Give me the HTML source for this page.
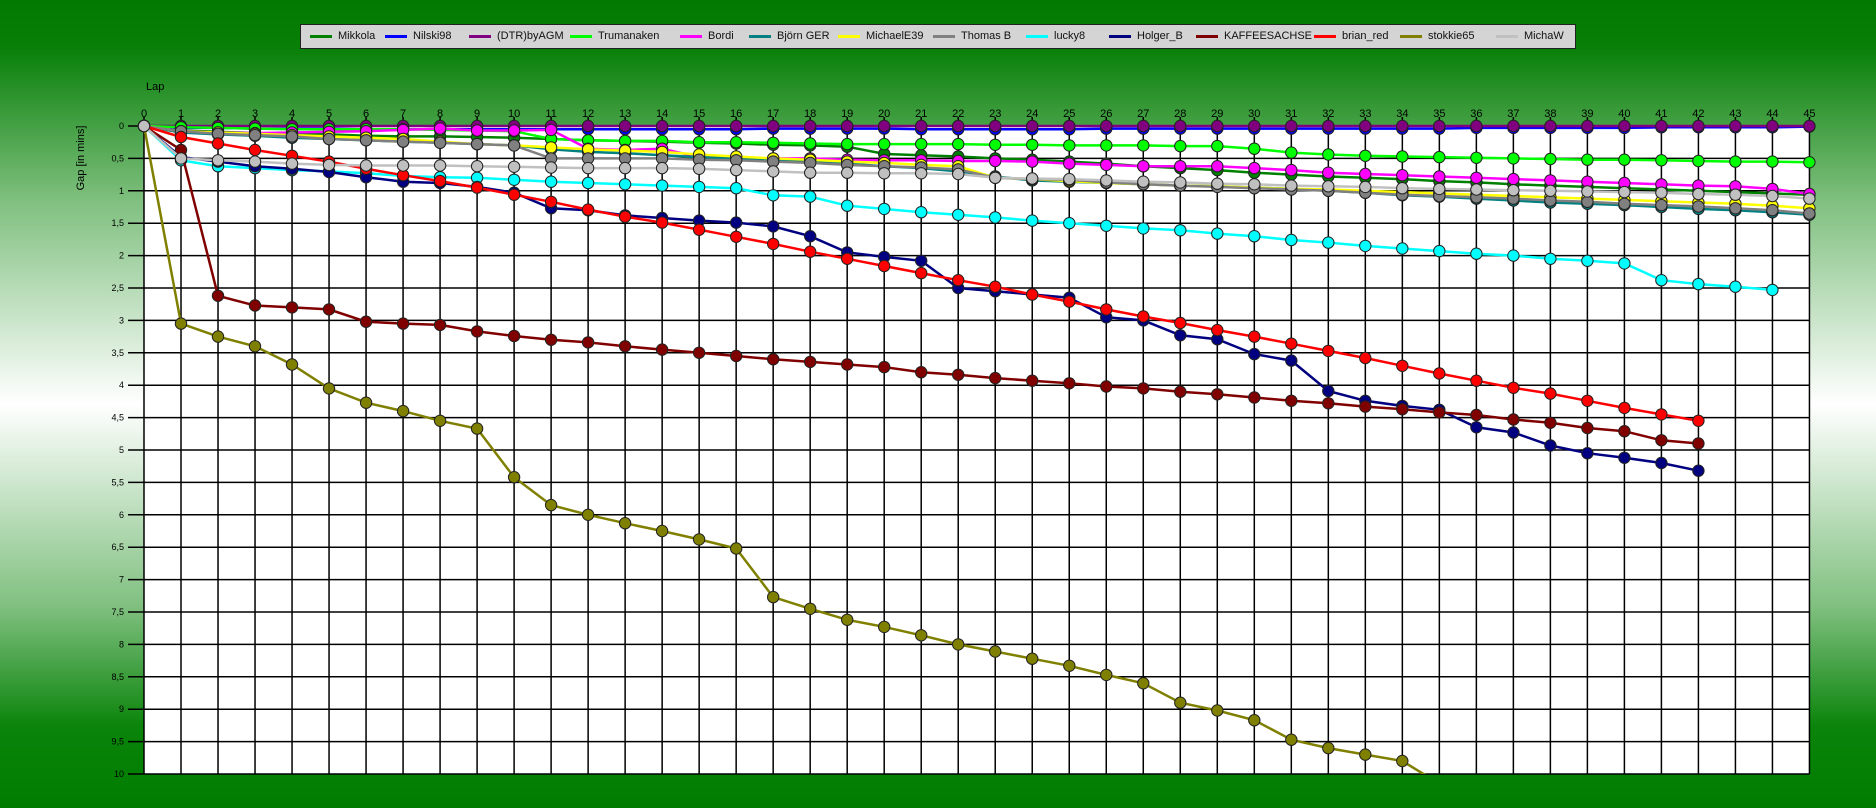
<!DOCTYPE html>
<html><head><meta charset="utf-8"><style>
html,body{margin:0;padding:0}
body{width:1876px;height:808px;overflow:hidden;background:linear-gradient(#027a02 0%,#088008 6%,#80c080 25%,#ffffff 50%,#80c080 75%,#0a840a 90%,#007d00 100%);font-family:"Liberation Sans",sans-serif;position:relative}
#leg{position:absolute;left:300px;top:24px;width:1276px;height:25px;background:#d4d4d4;border:1px solid #222;box-sizing:border-box}
.li{position:absolute;top:0;height:23px;font-size:11px;line-height:23px;color:#111;white-space:nowrap}
.li i{position:absolute;left:0;top:10px;width:22px;height:3px}
.li span{position:absolute;left:28px}
svg{position:absolute;left:0;top:0}
</style></head><body>
<div id="leg"></div>
<svg id="s" width="1876" height="808" font-family="Liberation Sans, sans-serif"></svg>
<script>
var names=[["Mikkola","#008000"],["Nilski98","#0000ff"],["(DTR)byAGM","#800080"],["Trumanaken","#00ff00"],["Bordi","#ff00ff"],["Björn GER","#008080"],["MichaelE39","#ffff00"],["Thomas B","#808080"],["lucky8","#00ffff"],["Holger_B","#000080"],["KAFFEESACHSE","#800000"],["brian_red","#ff0000"],["stokkie65","#808000"],["MichaW","#c0c0c0"]];
var lx=[309,384,468,569,679,748,837,932,1025,1108,1195,1313,1399,1495];
var L=document.getElementById('leg'),h='';
names.forEach(function(n,i){h+='<div class="li" style="left:'+(lx[i]-300)+'px"><i style="background:'+n[1]+'"></i><span>'+n[0]+'</span></div>';});
L.innerHTML=h;
var X0=144,DX=37.01,Y0=126,DY=64.8;
function X(l){return X0+l*DX}function Y(g){return Y0+g*DY}
var s='';
s+='<rect x="144" y="126" width="1665.5" height="648" fill="#fff"/>';
for(var i=0;i<=45;i++){var x=X(i);s+='<line x1="'+x+'" y1="117" x2="'+x+'" y2="774" stroke="#000" stroke-width="1.5"/>';s+='<text x="'+x+'" y="117" font-size="11" text-anchor="middle">'+i+'</text>';}
for(var k=0;k<=20;k++){var y=Y(k/2);s+='<line x1="128" y1="'+y+'" x2="1809.5" y2="'+y+'" stroke="#000" stroke-width="1.5"/>';var t=(k/2).toString().replace('.',',');s+='<text x="124" y="'+(y+3)+'" font-size="9" text-anchor="end">'+t+'</text>';}
s+='<text x="146" y="90" font-size="11">Lap</text>';
s+='<text transform="translate(84,158) rotate(-90)" font-size="11" text-anchor="middle">Gap [in mins]</text>';
var D={
"Mikkola":[0,0.07,0.09,0.11,0.12,0.13,0.15,0.16,0.16,0.17,0.18,0.2,0.22,0.23,0.24,0.26,0.27,0.29,0.3,0.32,0.43,0.45,0.47,0.5,0.52,0.55,0.58,0.62,0.65,0.68,0.72,0.75,0.78,0.8,0.82,0.85,0.87,0.9,0.92,0.94,0.96,0.98,1.0,1.02,1.04,1.06],
"Nilski98":[0,0.03,0.03,0.04,0.04,0.04,0.05,0.05,0.05,0.05,0.05,0.05,0.05,0.05,0.05,0.05,0.05,0.04,0.04,0.04,0.04,0.05,0.05,0.05,0.05,0.05,0.04,0.04,0.04,0.04,0.04,0.04,0.04,0.04,0.04,0.04,0.03,0.03,0.03,0.03,0.03,0.02,0.02,0.02,0.02,0.01],
"(DTR)byAGM":[0,0,0,0,0,0,0,0,0,0,0,0,0,0,0,0,0,0,0,0,0,0,0,0,0,0,0,0,0,0,0,0,0,0,0,0,0,0,0,0,0,0,0,0,0,0],
"Trumanaken":[0,0.02,0.03,0.04,0.05,0.05,0.05,0.05,0.06,0.07,0.08,0.2,0.22,0.23,0.23,0.25,0.25,0.26,0.27,0.28,0.28,0.28,0.28,0.29,0.29,0.3,0.3,0.3,0.31,0.31,0.35,0.41,0.44,0.46,0.47,0.48,0.49,0.5,0.51,0.52,0.52,0.53,0.54,0.55,0.55,0.56],
"Bordi":[0,0.08,0.1,0.11,0.1,0.09,0.08,0.06,0.04,0.07,0.07,0.06,0.35,0.37,0.35,0.48,0.49,0.5,0.5,0.52,0.53,0.53,0.54,0.54,0.55,0.58,0.6,0.62,0.62,0.62,0.65,0.68,0.72,0.74,0.76,0.78,0.8,0.82,0.84,0.86,0.88,0.9,0.92,0.93,0.97,1.05],
"Björn GER":[0,0.1,0.13,0.15,0.18,0.2,0.22,0.24,0.26,0.28,0.3,0.36,0.4,0.42,0.45,0.48,0.5,0.52,0.55,0.58,0.62,0.65,0.7,0.78,0.84,0.86,0.88,0.9,0.92,0.93,0.95,0.97,1.0,1.03,1.07,1.09,1.12,1.15,1.18,1.2,1.22,1.25,1.28,1.3,1.33,1.37],
"MichaelE39":[0,0.08,0.1,0.12,0.14,0.16,0.18,0.2,0.24,0.28,0.3,0.33,0.36,0.38,0.4,0.44,0.47,0.5,0.52,0.55,0.57,0.6,0.62,0.8,0.82,0.85,0.88,0.9,0.92,0.93,0.95,0.97,0.98,1.0,1.02,1.04,1.06,1.08,1.1,1.12,1.14,1.16,1.18,1.2,1.23,1.27],
"Thomas B":[0,0.08,0.12,0.14,0.16,0.2,0.22,0.24,0.26,0.28,0.3,0.5,0.5,0.5,0.5,0.52,0.53,0.55,0.57,0.6,0.62,0.64,0.67,0.8,0.82,0.83,0.87,0.9,0.92,0.94,0.96,0.98,1.0,1.03,1.06,1.08,1.1,1.12,1.15,1.17,1.2,1.22,1.24,1.27,1.3,1.35],
"lucky8":[0,0.53,0.62,0.65,0.68,0.7,0.73,0.77,0.79,0.8,0.83,0.86,0.88,0.9,0.92,0.94,0.96,1.07,1.09,1.23,1.28,1.33,1.37,1.41,1.46,1.5,1.54,1.58,1.61,1.66,1.7,1.76,1.8,1.85,1.89,1.93,1.97,2.0,2.05,2.08,2.12,2.38,2.44,2.48,2.53],
"Holger_B":[0,0.48,0.55,0.62,0.66,0.71,0.79,0.86,0.88,0.94,1.03,1.27,1.3,1.38,1.42,1.46,1.49,1.55,1.7,1.95,2.02,2.08,2.5,2.55,2.6,2.65,2.95,3.0,3.23,3.29,3.52,3.62,4.09,4.24,4.32,4.38,4.65,4.73,4.93,5.05,5.12,5.2,5.32],
"KAFFEESACHSE":[0,0.37,2.62,2.77,2.8,2.83,3.02,3.05,3.07,3.17,3.24,3.3,3.34,3.4,3.45,3.5,3.55,3.6,3.64,3.68,3.72,3.8,3.84,3.89,3.93,3.97,4.02,4.05,4.1,4.14,4.19,4.24,4.28,4.33,4.37,4.42,4.46,4.53,4.58,4.66,4.71,4.85,4.9],
"brian_red":[0,0.17,0.27,0.37,0.46,0.55,0.66,0.76,0.85,0.95,1.06,1.17,1.29,1.4,1.49,1.6,1.71,1.82,1.94,2.05,2.16,2.27,2.38,2.48,2.6,2.71,2.83,2.94,3.04,3.15,3.25,3.36,3.47,3.58,3.7,3.82,3.93,4.04,4.13,4.24,4.35,4.45,4.55],
"stokkie65":[0,3.05,3.25,3.4,3.68,4.05,4.27,4.4,4.55,4.67,5.42,5.85,6.0,6.13,6.25,6.38,6.52,7.27,7.45,7.62,7.73,7.86,8.0,8.11,8.22,8.33,8.47,8.6,8.9,9.02,9.17,9.47,9.6,9.7,9.8,10.15],
"MichaW":[0,0.5,0.53,0.55,0.58,0.6,0.61,0.61,0.61,0.62,0.63,0.64,0.65,0.65,0.65,0.66,0.68,0.7,0.72,0.72,0.73,0.73,0.74,0.8,0.81,0.82,0.84,0.86,0.87,0.89,0.9,0.92,0.93,0.94,0.96,0.97,0.98,0.99,1.0,1.01,1.02,1.03,1.05,1.06,1.08,1.12]};
s+='<clipPath id="c"><rect x="100" y="100" width="1720" height="674"/></clipPath><g clip-path="url(#c)">';
var order=[0,1,2,3,4,5,6,7,8,9,10,11,12,13];
order.forEach(function(i){var n=names[i],d=D[n[0]],p='';
d.forEach(function(g,l){p+=(l?'L':'M')+X(l).toFixed(1)+' '+Y(g).toFixed(1);});
s+='<path d="'+p+'" fill="none" stroke="'+n[1]+'" stroke-width="2.5"/>';
d.forEach(function(g,l){if(g<=10)s+='<circle cx="'+X(l).toFixed(1)+'" cy="'+Y(g).toFixed(1)+'" r="5.7" fill="'+n[1]+'" stroke="#222" stroke-width="1"/>';});});
s+='</g>';
document.getElementById('s').innerHTML=s;
</script>
</body></html>
